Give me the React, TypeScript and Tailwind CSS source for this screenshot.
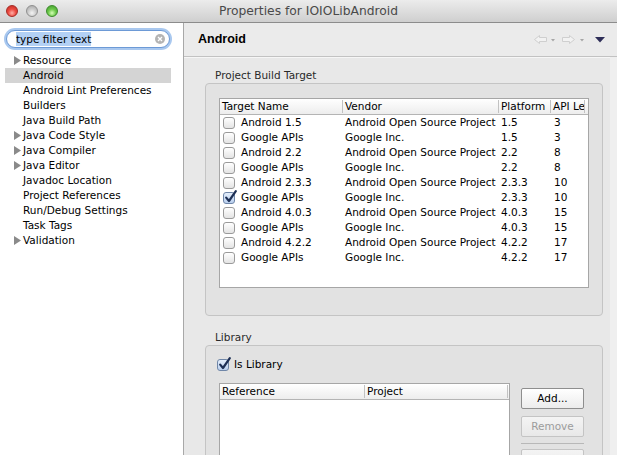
import React from 'react';

type TargetRow = {
  name: string;
  vendor: string;
  platform: string;
  api: string;
  checked?: boolean;
};

const targets: TargetRow[] = [
  { name: 'Android 1.5', vendor: 'Android Open Source Project', platform: '1.5', api: '3' },
  { name: 'Google APIs', vendor: 'Google Inc.', platform: '1.5', api: '3' },
  { name: 'Android 2.2', vendor: 'Android Open Source Project', platform: '2.2', api: '8' },
  { name: 'Google APIs', vendor: 'Google Inc.', platform: '2.2', api: '8' },
  { name: 'Android 2.3.3', vendor: 'Android Open Source Project', platform: '2.3.3', api: '10' },
  { name: 'Google APIs', vendor: 'Google Inc.', platform: '2.3.3', api: '10', checked: true },
  { name: 'Android 4.0.3', vendor: 'Android Open Source Project', platform: '4.0.3', api: '15' },
  { name: 'Google APIs', vendor: 'Google Inc.', platform: '4.0.3', api: '15' },
  { name: 'Android 4.2.2', vendor: 'Android Open Source Project', platform: '4.2.2', api: '17' },
  { name: 'Google APIs', vendor: 'Google Inc.', platform: '4.2.2', api: '17' },
];

const treeItems: { label: string; expandable?: boolean; selected?: boolean }[] = [
  { label: 'Resource', expandable: true },
  { label: 'Android', selected: true },
  { label: 'Android Lint Preferences' },
  { label: 'Builders' },
  { label: 'Java Build Path' },
  { label: 'Java Code Style', expandable: true },
  { label: 'Java Compiler', expandable: true },
  { label: 'Java Editor', expandable: true },
  { label: 'Javadoc Location' },
  { label: 'Project References' },
  { label: 'Run/Debug Settings' },
  { label: 'Task Tags' },
  { label: 'Validation', expandable: true },
];

function Checkbox({ checked }: { checked?: boolean }) {
  return (
    <span
      className={`relative block h-[12px] w-[12px] shrink-0 rounded-[3px] border ${
        checked
          ? 'border-[#6f86a8] bg-gradient-to-b from-[#e4eefb] to-[#b9cfee]'
          : 'border-[#9a9a9a] bg-gradient-to-b from-white to-[#e4e4e4]'
      }`}
    >
      {checked && (
        <svg className="absolute left-[0px] top-[-3px]" width="14" height="14" viewBox="0 0 14 14">
          <path d="M2.2 7.6 L5 11 L11.8 1.2" fill="none" stroke="#1d2f55" strokeWidth="2.2" strokeLinecap="round" strokeLinejoin="round" />
        </svg>
      )}
    </span>
  );
}

function TreeArrow() {
  return (
    <svg width="7" height="9" viewBox="0 0 7 9">
      <path d="M0 0 L7 4.5 L0 9 Z" fill="#8a8a8a" />
    </svg>
  );
}

function Light({ color }: { color: 'red' | 'gray' | 'green' }) {
  const cls =
    color === 'red'
      ? 'bg-[radial-gradient(circle_at_50%_70%,#ffb0a8_0%,#ec4a40_45%,#c02a22_100%)] border-[#a52a24]'
      : color === 'gray'
        ? 'bg-[radial-gradient(circle_at_50%_70%,#f4f4f4_0%,#c8c8c8_50%,#a2a2a2_100%)] border-[#8f8f8f]'
        : 'bg-[radial-gradient(circle_at_50%_70%,#d6ffb8_0%,#6cc84a_45%,#3f9a2a_100%)] border-[#3b8a2a]';
  return <span className={`block h-[12px] w-[12px] rounded-full border ${cls}`} />;
}

function HeaderCell({ children, first }: { children: React.ReactNode; first?: boolean }) {
  return (
    <div className="flex h-[15px] items-center overflow-hidden whitespace-nowrap">
      {!first && <span className="h-[13px] w-px shrink-0 bg-[#c2c2c2]" />}
      <span className="pl-[2px]">{children}</span>
    </div>
  );
}

function Button({ label, disabled }: { label: string; disabled?: boolean }) {
  return (
    <div
      className={`flex h-[21px] w-[63px] items-center justify-center rounded-[2px] border bg-gradient-to-b ${
        disabled
          ? 'border-[#c4c4c4] from-[#f4f4f4] to-[#e8e8e8] text-[#9c9c9c]'
          : 'border-[#8e8e8e] from-white to-[#ececec] text-black'
      }`}
    >
      {label}
    </div>
  );
}

export default function App() {
  return (
    <div className="flex h-[455px] w-[617px] flex-col overflow-hidden bg-[#e8e8e8] font-['DejaVu_Sans',sans-serif] text-[10.5px] text-black">
      {/* title bar */}
      <div className="grid h-[23px] shrink-0 grid-cols-[1fr_auto_1fr] items-center border-b border-[#8c8c8c] bg-gradient-to-b from-[#ececec] to-[#cfcfcf]">
        <div className="flex items-center gap-[8px] pl-[6px]">
          <Light color="red" />
          <Light color="gray" />
          <Light color="green" />
        </div>
        <div className="text-[12.3px] text-[#4a4a4a]">Properties for IOIOLibAndroid</div>
        <div />
      </div>

      <div className="flex min-h-0 flex-1">
        {/* sidebar */}
        <div className="flex w-[184px] shrink-0 flex-col border-r border-[#a8a8a8] bg-white">
          <div className="pl-[6px] pr-[13px] pt-[7px]">
            <div className="flex h-[18px] items-center rounded-full border border-[#6d9ad6] bg-white pl-[9px] pr-[4px] shadow-[0_0_0_2px_#a9c8ef]">
              <span className="bg-[#b3d1f5] leading-[14px]">type filter text</span>
              <span className="flex-1" />
              <span className="flex h-[10px] w-[10px] items-center justify-center rounded-full bg-[#b4b4b4]">
                <svg width="6" height="6" viewBox="0 0 6 6">
                  <path d="M1 1 L5 5 M5 1 L1 5" stroke="#fff" strokeWidth="1.3" />
                </svg>
              </span>
            </div>
          </div>
          <div className="mt-[5px] flex flex-col">
            {treeItems.map((item) => (
              <div
                key={item.label}
                className={`ml-[5px] mr-[12px] flex h-[15px] items-center whitespace-nowrap ${item.selected ? 'bg-[#d4d4d4]' : ''}`}
              >
                <span className="flex w-[18px] shrink-0 justify-end pr-[2px]">
                  {item.expandable && <TreeArrow />}
                </span>
                <span>{item.label}</span>
              </div>
            ))}
          </div>
        </div>

        {/* right panel */}
        <div className="flex min-w-0 flex-1 flex-col">
          <div className="flex h-[34px] shrink-0 items-center border-b border-[#c2c2c2] bg-[#ebebeb] pl-[14px] pr-[11px] shadow-[0_1px_0_#f6f6f6]">
            <span className="font-['Liberation_Sans',sans-serif] text-[12.5px] font-bold">Android</span>
            <span className="flex-1" />
            <svg width="72" height="10" viewBox="0 0 72 10">
              <path d="M0.5 4.5 L5.5 0.5 L5.5 2.5 L12.5 2.5 L12.5 6.5 L5.5 6.5 L5.5 8.5 Z" fill="#f2f2f2" stroke="#cfcfcf" />
              <path d="M17 4 L21 4 L19 6.5 Z" fill="#a6a6a6" />
              <path d="M40.5 4.5 L35.5 0.5 L35.5 2.5 L28.5 2.5 L28.5 6.5 L35.5 6.5 L35.5 8.5 Z" fill="#f2f2f2" stroke="#cfcfcf" />
              <path d="M46 4 L50 4 L48 6.5 Z" fill="#a6a6a6" />
              <path d="M61 2 L71 2 L66 7.5 Z" fill="#2e2e58" />
            </svg>
          </div>

          <div className="flex min-h-0 flex-1">
            <div className="w-[419px] shrink-0 pl-[21px] pt-[11px]">
              <div className="h-[15px] pl-[10px] leading-[15px] text-[#2a2a2a]">Project Build Target</div>
              <div className="rounded-[4px] border border-[#c4c4c4] bg-[#e2e2e2] px-[13px] pb-[27px] pt-[14px]">
                <div className="h-[190px] border border-[#a6a6a6] bg-white">
                  <div className="grid grid-cols-[122px_156px_52px_34px_1fr] border-b border-[#b4b4b4] bg-gradient-to-b from-white to-[#ededed]">
                    <HeaderCell first>Target Name</HeaderCell>
                    <HeaderCell>Vendor</HeaderCell>
                    <HeaderCell>Platform</HeaderCell>
                    <HeaderCell>API Le</HeaderCell>
                    <HeaderCell>{''}</HeaderCell>
                  </div>
                  {targets.map((t, i) => (
                    <div key={i} className="grid h-[15px] grid-cols-[122px_156px_52px_34px_1fr] items-center whitespace-nowrap">
                      <div className="flex items-center gap-[6px] pl-[3px]">
                        <Checkbox checked={t.checked} />
                        <span>{t.name}</span>
                      </div>
                      <div className="pl-[3px]">{t.vendor}</div>
                      <div className="pl-[3px]">{t.platform}</div>
                      <div className="pl-[4px]">{t.api}</div>
                      <div />
                    </div>
                  ))}
                </div>
              </div>

              <div className="mt-[14px] h-[15px] pl-[10px] leading-[15px] text-[#2a2a2a]">Library</div>
              <div className="h-[140px] rounded-[4px] border border-[#c4c4c4] bg-[#e2e2e2] px-[11px] pt-[12px]">
                <div className="flex h-[13px] items-center gap-[5px]">
                  <Checkbox checked />
                  <span>Is Library</span>
                </div>
                <div className="mt-[12px] flex items-start gap-[11px] pl-[2px]">
                  <div className="h-[90px] w-[291px] border border-[#a6a6a6] bg-white">
                    <div className="grid grid-cols-[144px_143px_1fr] border-b border-[#b4b4b4] bg-gradient-to-b from-white to-[#ededed]">
                      <HeaderCell first>Reference</HeaderCell>
                      <HeaderCell>Project</HeaderCell>
                      <HeaderCell>{''}</HeaderCell>
                    </div>
                  </div>
                  <div className="flex flex-col pt-[5px]">
                    <Button label="Add..." />
                    <div className="mt-[7px]">
                      <Button label="Remove" disabled />
                    </div>
                    <div className="mt-[6px] h-px w-[63px] bg-[#b8b8b8]" />
                    <div className="mt-[5px]">
                      <Button label="" disabled />
                    </div>
                  </div>
                </div>
              </div>
            </div>
            <div className="flex-1" />
            <div className="w-[7px] shrink-0 bg-[#efefef]" />
          </div>
        </div>
      </div>
    </div>
  );
}
